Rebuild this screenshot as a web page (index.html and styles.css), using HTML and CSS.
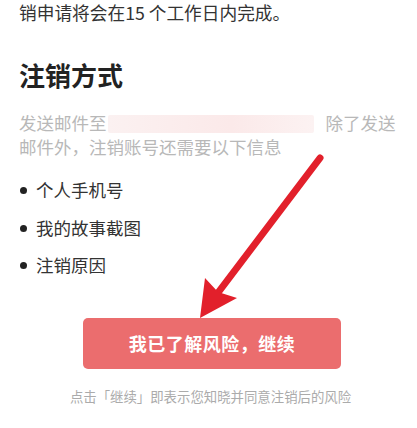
FILE: index.html
```html
<!DOCTYPE html>
<html lang="zh-CN">
<head>
    <meta charset="UTF-8">
    <meta name="viewport" content="width=device-width, initial-scale=1.0">
    <title>注销方式</title>
    <link rel="stylesheet" href="styles.css">
</head>
<body>
    <div class="page">
        <p class="intro">销申请将会在15 个工作日内完成。</p>

        <h2 class="title">注销方式</h2>

        <p class="desc"><span>发送邮件至</span><span class="email"></span><span>除了发送</span><br><span>邮件外，注销账号还需要以下信息</span></p>

        <ul class="info-list">
            <li>个人手机号</li>
            <li>我的故事截图</li>
            <li>注销原因</li>
        </ul>

        <div class="actions">
            <button class="confirm-btn">我已了解风险，继续</button>
            <p class="note">点击「继续」即表示您知晓并同意注销后的风险</p>
        </div>

        <svg class="arrow" width="417" height="428" viewBox="0 0 417 428">
            <line x1="320" y1="158" x2="214" y2="298" stroke="#e2202b" stroke-width="7" stroke-linecap="round"/>
            <polygon points="200,318 205,278 218,292 237,298" fill="#e2202b"/>
        </svg>
    </div>
</body>
</html>
```

FILE: styles.css
```css
body {
    margin: 0;
    padding: 0;
    background: #fff;
    font-family: "Noto Sans CJK SC", "Noto Sans", sans-serif;
}
.page {
    position: relative;
    width: 417px;
    height: 428px;
    padding: 0 19px;
    box-sizing: border-box;
    overflow: hidden;
}
.intro {
    margin: 0;
    font-size: 17.7px;
    line-height: 24px;
    color: #333;
}
.title {
    margin: 33px 0 0;
    font-size: 26px;
    line-height: 36px;
    font-weight: 700;
    color: #222;
}
.desc {
    margin: 18px 0 0;
    font-size: 17.5px;
    line-height: 24px;
    color: #b8b8b8;
}
.email {
    display: inline-block;
    width: 206px;
    height: 18px;
    margin: 0 12px 0 1px;
    vertical-align: -3px;
    background: linear-gradient(90deg, #fbf1f1, #fbe9e9 60%, #fcf2f2);
    border-radius: 2px;
}
.info-list {
    list-style: none;
    margin: 12px 0 0;
    padding: 0;
}
.info-list li {
    position: relative;
    padding-left: 17px;
    font-size: 17.5px;
    line-height: 37.5px;
    color: #333;
}
.info-list li::before {
    content: "";
    position: absolute;
    left: 1px;
    top: 16px;
    width: 7px;
    height: 7px;
    border-radius: 50%;
    background: #222;
}
.actions {
    display: flex;
    flex-direction: column;
    align-items: center;
    margin-top: 34px;
}
.confirm-btn {
    width: 258px;
    height: 51px;
    margin-left: 7px;
    border: none;
    border-radius: 5px;
    background: #eb6d6e;
    color: #fff;
    font-family: inherit;
    font-size: 18px;
    font-weight: 700;
    letter-spacing: 0.5px;
}
.note {
    margin: 17px 0 0 4px;
    font-size: 13.4px;
    line-height: 20px;
    color: #ababab;
}
.arrow {
    position: absolute;
    left: 0;
    top: 0;
    pointer-events: none;
}
```
